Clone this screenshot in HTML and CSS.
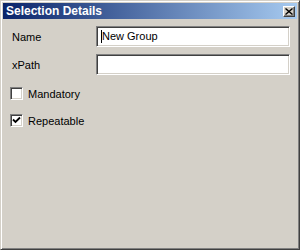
FILE: index.html
```html
<!DOCTYPE html>
<html lang="en">
<head>
	<meta charset="UTF-8">
	<title>Selection Details</title>
	<link rel="stylesheet" href="styles.css">
</head>
<body>
	<div class="window">
		<div class="titlebar">
			<span class="title">Selection Details</span>
			<button class="close-button" aria-label="Close">
				<svg width="8" height="7" viewBox="0 0 8 7"><path d="M0.5 0.5 L7.5 6.5 M7.5 0.5 L0.5 6.5" stroke="#000" stroke-width="1.4" fill="none"/></svg>
			</button>
		</div>

		<div class="form">
			<label class="field-label">Name</label>
			<div class="text-field"><span class="caret"></span>New Group</div>
			<label class="field-label">xPath</label>
			<div class="text-field"></div>
		</div>

		<div class="checks">
			<label class="check-row"><span class="check-box"></span>Mandatory</label>
			<label class="check-row"><span class="check-box">
				<svg width="9" height="9" viewBox="0 0 9 9"><path d="M1 3.5 L3.5 6 L8 1.5" stroke="#000" stroke-width="1.8" fill="none"/></svg>
			</span>Repeatable</label>
		</div>
	</div>
</body>
</html>
```

FILE: styles.css
```css
body {
	margin: 0;
	padding: 0;
	font-family: 'Liberation Sans', Arial, sans-serif;
	font-size: 11px;
	color: #000;
}

.window {
	width: 300px;
	height: 250px;
	box-sizing: border-box;
	background-color: #d4d0c8;
	border: 1px solid;
	border-color: #d4d0c8 #404040 #404040 #d4d0c8;
	box-shadow: inset 1px 1px #fff, inset -1px -1px #808080;
	padding: 2px;
}

.titlebar {
	height: 16px;
	display: flex;
	align-items: center;
	justify-content: space-between;
	padding: 0 2px 0 3px;
	background: linear-gradient(to right, #0a246a, #a6caf0);
}

.title {
	color: #fff;
	font-weight: bold;
	font-size: 12px;
}

.close-button {
	width: 12px;
	height: 11px;
	padding: 0;
	display: flex;
	align-items: center;
	justify-content: center;
	background-color: #d4d0c8;
	border: 1px solid;
	border-color: #fff #404040 #404040 #fff;
	box-shadow: inset -1px -1px #808080;
}

.form {
	display: grid;
	grid-template-columns: 84px 194px;
	row-gap: 7px;
	align-items: center;
	padding: 7px 0 0 9px;
}

.text-field {
	height: 21px;
	box-sizing: border-box;
	background: #fff;
	border: 1px solid;
	border-color: #808080 #fff #fff #808080;
	box-shadow: inset 1px 1px #404040, inset -1px -1px #d4d0c8;
	padding: 0 0 0 5px;
	display: flex;
	align-items: center;
	line-height: 1;
}

.caret {
	width: 1px;
	height: 13px;
	background: #000;
	margin-right: 0;
	margin-left: -1px;
}

.checks {
	display: flex;
	flex-direction: column;
	gap: 14px;
	padding: 12px 0 0 7px;
}

.check-row {
	display: flex;
	align-items: center;
	gap: 5px;
	height: 13px;
}

.check-box {
	width: 13px;
	height: 13px;
	box-sizing: border-box;
	background: #fff;
	border: 1px solid;
	border-color: #808080 #fff #fff #808080;
	box-shadow: inset 1px 1px #404040, inset -1px -1px #d4d0c8;
	display: flex;
	align-items: center;
	justify-content: center;
}
```
